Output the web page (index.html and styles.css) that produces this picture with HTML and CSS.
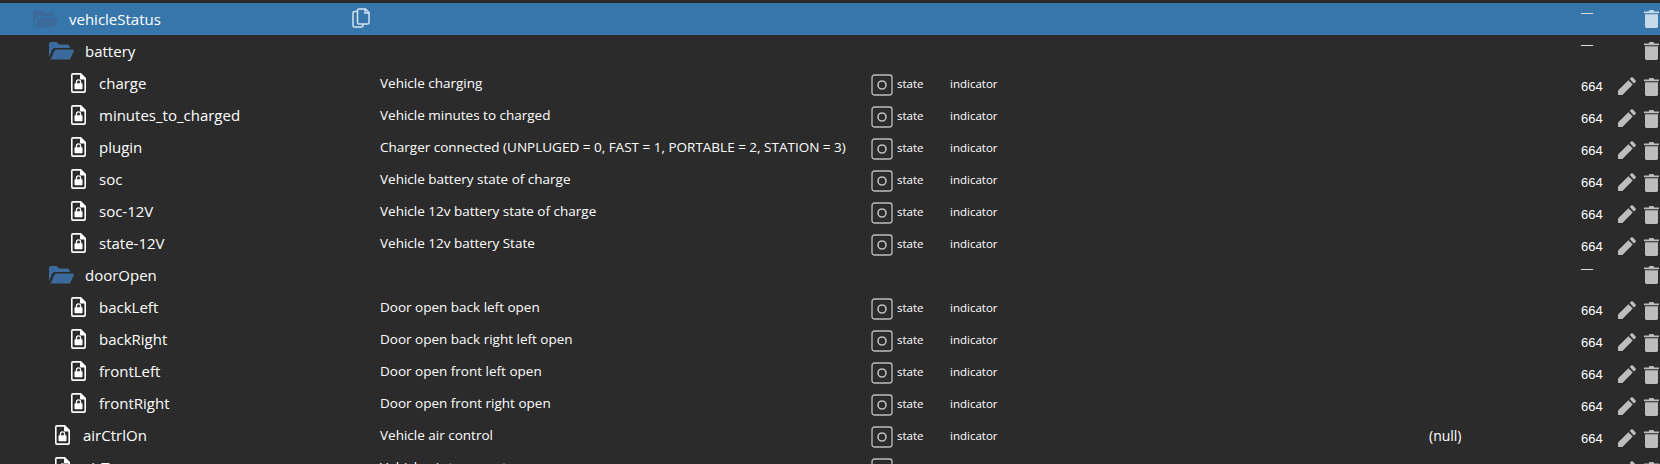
FILE: index.html
```html
<!DOCTYPE html>
<html lang="en">
<head>
<meta charset="utf-8">
<title>vehicleStatus</title>
<link rel="stylesheet" href="styles.css">
</head>
<body>
<svg class="defs" width="0" height="0" aria-hidden="true">
  <defs>
    <symbol id="folder" viewBox="0 0 25 18">
      <path d="M0 15.6V2.2C0 1 1 0 2.200 0h5.300l2.800 2.600h8.200c1.200 0 2.200 1 2.200 2.200V6H6.400c-1.600 0-2.900.9-3.500 2.300z"/>
      <path d="M1.600 17.600 5.300 9c.4-1 1.300-1.500 2.300-1.500h16c.9 0 1.500.9 1.100 1.700l-3.300 7.400c-.3.6-.9 1-1.600 1H2.200c-.5 0-.8-.5-.6-1z"/>
    </symbol>
    <symbol id="file" viewBox="0 0 15 20">
      <path fill-rule="evenodd" d="M2 0h8l5 5v13a2 2 0 0 1-2 2H2a2 2 0 0 1-2-2V2a2 2 0 0 1 2-2zm0 1.700a.4.4 0 0 0-.4.4v15.800c0 .2.200.4.400.4h11c.2 0 .4-.2.400-.4V6.400H9V1.700z"/>
      <path fill-rule="evenodd" d="M4.200 10.200h.6V9a2.700 2.700 0 0 1 5.400 0v1.200h.6c.4 0 .7.300.7.700v4.600c0 .4-.3.700-.7.700H4.200c-.4 0-.7-.3-.7-.7v-4.600c0-.4.300-.7.700-.7zm1.900 0h2.800V9a1.400 1.400 0 0 0-2.800 0z"/>
    </symbol>
    <symbol id="state" viewBox="0 0 22 22">
      <rect x="1" y="1" width="20" height="20" rx="2.500" fill="none" stroke="currentColor" stroke-width="1.300"/>
      <circle cx="11" cy="11" r="4" fill="none" stroke="currentColor" stroke-width="1.600"/>
    </symbol>
    <symbol id="pencil" viewBox="0 0 18 18">
      <path d="M0 18v-4.400L10.400 3.200l4.400 4.400L4.400 18zM11.600 2l1.500-1.500c.5-.5 1.200-.5 1.700 0l2.700 2.700c.5.500.5 1.200 0 1.700L16 6.400z"/>
    </symbol>
    <symbol id="trash" viewBox="0 0 15 19">
      <path d="M0 2.400h4.700L5.500 1h4l.8 1.400H15v1.800H0z"/>
      <path d="M1 5.300h13v11.900c0 1-.8 1.800-1.800 1.800H2.800c-1 0-1.800-.8-1.800-1.800z"/>
    </symbol>
    <symbol id="copy" viewBox="0 0 18 20">
      <path fill="none" stroke="currentColor" stroke-width="1.500" d="M5.500 3.500H2.500a1.500 1.500 0 0 0-1.500 1.500v12.500A1.500 1.500 0 0 0 2.500 19h7a1.500 1.500 0 0 0 1.500-1.500V16"/>
      <path fill="none" stroke="currentColor" stroke-width="1.500" d="M7 1h6.500L17 4.500v10a1.500 1.500 0 0 1-1.500 1.500H7a1.500 1.500 0 0 1-1.500-1.500v-12A1.500 1.500 0 0 1 7 1zM13 1v4h4"/>
    </symbol>
  </defs>
</svg>

<main class="tree">
  <div class="row folder-row selected">
    <div class="name lvl0"><svg class="i-folder"><use href="#folder"/></svg><span>vehicleStatus</span></div>
    <div class="desc"><svg class="i-copy"><use href="#copy"/></svg></div>
    <div class="state"></div><div class="kind"></div><div class="value"></div>
    <div class="acl dash">—</div><div class="pen"></div>
    <svg class="i-trash"><use href="#trash"/></svg>
  </div>
  <div class="row folder-row">
    <div class="name lvl1"><svg class="i-folder"><use href="#folder"/></svg><span>battery</span></div>
    <div class="desc"></div><div class="state"></div><div class="kind"></div><div class="value"></div>
    <div class="acl dash">—</div><div class="pen"></div>
    <svg class="i-trash"><use href="#trash"/></svg>
  </div>
  <div class="row">
    <div class="name lvl2"><svg class="i-file"><use href="#file"/></svg><span>charge</span></div>
    <div class="desc">Vehicle charging</div>
    <div class="state"><svg class="i-state"><use href="#state"/></svg>state</div><div class="kind">indicator</div><div class="value"></div>
    <div class="acl">664</div><svg class="i-pencil"><use href="#pencil"/></svg>
    <svg class="i-trash"><use href="#trash"/></svg>
  </div>
  <div class="row">
    <div class="name lvl2"><svg class="i-file"><use href="#file"/></svg><span>minutes_to_charged</span></div>
    <div class="desc">Vehicle minutes to charged</div>
    <div class="state"><svg class="i-state"><use href="#state"/></svg>state</div><div class="kind">indicator</div><div class="value"></div>
    <div class="acl">664</div><svg class="i-pencil"><use href="#pencil"/></svg>
    <svg class="i-trash"><use href="#trash"/></svg>
  </div>
  <div class="row">
    <div class="name lvl2"><svg class="i-file"><use href="#file"/></svg><span>plugin</span></div>
    <div class="desc">Charger connected (UNPLUGED = 0, FAST = 1, PORTABLE = 2, STATION = 3)</div>
    <div class="state"><svg class="i-state"><use href="#state"/></svg>state</div><div class="kind">indicator</div><div class="value"></div>
    <div class="acl">664</div><svg class="i-pencil"><use href="#pencil"/></svg>
    <svg class="i-trash"><use href="#trash"/></svg>
  </div>
  <div class="row">
    <div class="name lvl2"><svg class="i-file"><use href="#file"/></svg><span>soc</span></div>
    <div class="desc">Vehicle battery state of charge</div>
    <div class="state"><svg class="i-state"><use href="#state"/></svg>state</div><div class="kind">indicator</div><div class="value"></div>
    <div class="acl">664</div><svg class="i-pencil"><use href="#pencil"/></svg>
    <svg class="i-trash"><use href="#trash"/></svg>
  </div>
  <div class="row">
    <div class="name lvl2"><svg class="i-file"><use href="#file"/></svg><span>soc-12V</span></div>
    <div class="desc">Vehicle 12v battery state of charge</div>
    <div class="state"><svg class="i-state"><use href="#state"/></svg>state</div><div class="kind">indicator</div><div class="value"></div>
    <div class="acl">664</div><svg class="i-pencil"><use href="#pencil"/></svg>
    <svg class="i-trash"><use href="#trash"/></svg>
  </div>
  <div class="row">
    <div class="name lvl2"><svg class="i-file"><use href="#file"/></svg><span>state-12V</span></div>
    <div class="desc">Vehicle 12v battery State</div>
    <div class="state"><svg class="i-state"><use href="#state"/></svg>state</div><div class="kind">indicator</div><div class="value"></div>
    <div class="acl">664</div><svg class="i-pencil"><use href="#pencil"/></svg>
    <svg class="i-trash"><use href="#trash"/></svg>
  </div>
  <div class="row folder-row">
    <div class="name lvl1"><svg class="i-folder"><use href="#folder"/></svg><span>doorOpen</span></div>
    <div class="desc"></div><div class="state"></div><div class="kind"></div><div class="value"></div>
    <div class="acl dash">—</div><div class="pen"></div>
    <svg class="i-trash"><use href="#trash"/></svg>
  </div>
  <div class="row">
    <div class="name lvl2"><svg class="i-file"><use href="#file"/></svg><span>backLeft</span></div>
    <div class="desc">Door open back left open</div>
    <div class="state"><svg class="i-state"><use href="#state"/></svg>state</div><div class="kind">indicator</div><div class="value"></div>
    <div class="acl">664</div><svg class="i-pencil"><use href="#pencil"/></svg>
    <svg class="i-trash"><use href="#trash"/></svg>
  </div>
  <div class="row">
    <div class="name lvl2"><svg class="i-file"><use href="#file"/></svg><span>backRight</span></div>
    <div class="desc">Door open back right left open</div>
    <div class="state"><svg class="i-state"><use href="#state"/></svg>state</div><div class="kind">indicator</div><div class="value"></div>
    <div class="acl">664</div><svg class="i-pencil"><use href="#pencil"/></svg>
    <svg class="i-trash"><use href="#trash"/></svg>
  </div>
  <div class="row">
    <div class="name lvl2"><svg class="i-file"><use href="#file"/></svg><span>frontLeft</span></div>
    <div class="desc">Door open front left open</div>
    <div class="state"><svg class="i-state"><use href="#state"/></svg>state</div><div class="kind">indicator</div><div class="value"></div>
    <div class="acl">664</div><svg class="i-pencil"><use href="#pencil"/></svg>
    <svg class="i-trash"><use href="#trash"/></svg>
  </div>
  <div class="row">
    <div class="name lvl2"><svg class="i-file"><use href="#file"/></svg><span>frontRight</span></div>
    <div class="desc">Door open front right open</div>
    <div class="state"><svg class="i-state"><use href="#state"/></svg>state</div><div class="kind">indicator</div><div class="value"></div>
    <div class="acl">664</div><svg class="i-pencil"><use href="#pencil"/></svg>
    <svg class="i-trash"><use href="#trash"/></svg>
  </div>
  <div class="row">
    <div class="name lvl1f"><svg class="i-file"><use href="#file"/></svg><span>airCtrlOn</span></div>
    <div class="desc">Vehicle air control</div>
    <div class="state"><svg class="i-state"><use href="#state"/></svg>state</div><div class="kind">indicator</div><div class="value">(null)</div>
    <div class="acl">664</div><svg class="i-pencil"><use href="#pencil"/></svg>
    <svg class="i-trash"><use href="#trash"/></svg>
  </div>
  <div class="row">
    <div class="name lvl1f"><svg class="i-file"><use href="#file"/></svg><span>airTemp</span></div>
    <div class="desc">Vehicle air temperature</div>
    <div class="state"><svg class="i-state"><use href="#state"/></svg>state</div><div class="kind">indicator</div><div class="value"></div>
    <div class="acl">664</div><svg class="i-pencil"><use href="#pencil"/></svg>
    <svg class="i-trash"><use href="#trash"/></svg>
  </div>
</main>
</body>
</html>
```

FILE: styles.css
```css
html, body {
  margin: 0;
  height: 100%;
  overflow: hidden;
  background: #2b2b2b;
}
body {
  padding-top: 3px;
  box-sizing: border-box;
  color: #fff;
  font-family: "Open Sans", "Noto Sans", sans-serif;
}
.defs { position: absolute; }
.tree { display: flex; flex-direction: column; }
.row {
  display: flex;
  align-items: center;
  height: 32px;
  flex: none;
  font-size: 13.500px;
}
.selected { background: #3776ab; }
.name {
  width: 380px;
  flex: none;
  display: flex;
  align-items: center;
  font-size: 15px;
  box-sizing: border-box;
}
.lvl0 { padding-left: 33px; }
.lvl1 { padding-left: 49px; }
.lvl2 { padding-left: 71px; }
.lvl1f { padding-left: 55px; }
.i-folder { width: 25px; height: 18px; fill: #3d6a9c; margin-right: 11px; flex: none; }
.i-file { width: 15px; height: 20px; fill: #fff; margin-right: 13px; flex: none; }
.desc {
  width: 491px;
  flex: none;
  display: flex;
  align-items: center;
  white-space: nowrap;
}
.i-copy { width: 18px; height: 20px; color: #d3e2ef; margin-left: -28px; margin-top: -2px; }
.state {
  width: 79px;
  flex: none;
  display: flex;
  align-items: center;
  font-size: 11.500px;
}
.i-state { width: 22px; height: 22px; color: #bdbdbd; margin: 4px 4px 0 0; flex: none; }
.kind { width: 479px; flex: none; font-size: 11.500px; }
.value { width: 152px; flex: none; font-size: 14px; }
.acl {
  width: 22px;
  flex: none;
  font-size: 13px;
  font-family: "Liberation Sans", Arial, sans-serif;
  margin: 6px 15px 0 0;
}
.dash { font-size: 12px; margin-top: -12px; line-height: 1; color: #ddd; }
.pen { width: 18px; flex: none; }
.i-pencil { width: 18px; height: 18px; fill: #bdbdbd; flex: none; margin-top: 6px; }
.i-trash { width: 15px; height: 19px; fill: #bdbdbd; margin: 6px 0 0 8px; flex: none; }
.folder-row .i-trash { margin-top: -2px; }
.selected .i-trash { fill: #c6d9ea; }
```
